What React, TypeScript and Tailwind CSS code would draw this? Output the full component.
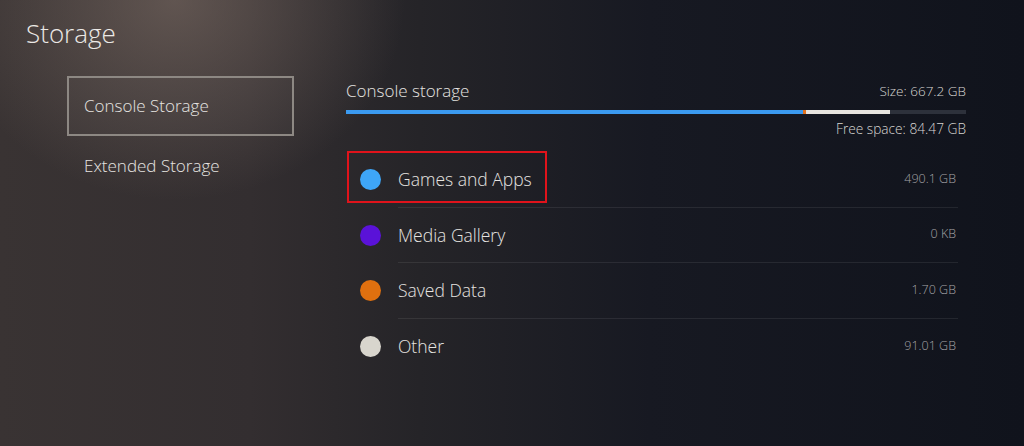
import React from "react";

const rows = [
  { label: "Games and Apps", value: "490.1 GB", color: "bg-[#3ea6f8]", highlight: true },
  { label: "Media Gallery", value: "0 KB", color: "bg-[#5a12d8]" },
  { label: "Saved Data", value: "1.70 GB", color: "bg-[#e0700f]" },
  { label: "Other", value: "91.01 GB", color: "bg-[#d8d5cd]" },
];

export default function App() {
  return (
    <div
      className="relative w-[1024px] h-[446px] overflow-hidden text-[#e6e4e1] bg-[radial-gradient(ellipse_230px_200px_at_175px_0px,rgba(140,122,112,0.5),rgba(140,122,112,0)),linear-gradient(90deg,#393333_0px,#332e30_250px,#252428_420px,#171922_650px,#10131c_1024px)]"
      style={{ fontFamily: '"Open Sans", "Noto Sans", sans-serif' }}
    >
      <div className="pl-[26px] pt-[18px] h-[48px] text-[26px] leading-[30px] font-light text-[#ebe9e6]">
        Storage
      </div>
      <div className="flex">
        <div className="ml-[67px] w-[227px] pt-[28px] flex flex-col">
          <div className="h-[60px] border-2 border-[#8d8883] flex items-center pl-[15px] text-[17px] font-light bg-[rgba(255,255,255,0.02)]">
            Console Storage
          </div>
          <div className="h-[60px] flex items-center pl-[17px] text-[17px] font-light">
            Extended Storage
          </div>
        </div>
        <div className="ml-[52px] w-[620px] pt-[31px] flex flex-col">
          <div className="flex justify-between items-center h-[24px]">
            <span className="text-[17px] font-light">Console storage</span>
            <span className="text-[13.5px] font-light text-[#d8d6d3]">Size: 667.2 GB</span>
          </div>
          <div className="mt-[7px] h-[4px] flex bg-[#2d313b]">
            <div className="w-[457px] bg-[#3b9af0]" />
            <div className="w-[3px] bg-[#e2711d]" />
            <div className="w-[84px] bg-[#e7e4df]" />
          </div>
          <div className="mt-[6px] h-[18px] flex justify-end items-center text-[13.7px] font-light text-[#d8d6d3]">
            Free space: 84.47 GB
          </div>
          <div className="mt-[14px] flex flex-col">
            {rows.map((r, i) => (
              <div key={r.label} className="relative h-[55.5px] flex items-center">
                <div className={`ml-[14px] w-[21px] h-[21px] rounded-full ${r.color}`} />
                <div
                  className={`ml-[17px] mr-[8px] flex-1 h-full flex items-center justify-between ${
                    i < rows.length - 1 ? "border-b border-[rgba(255,255,255,0.08)]" : ""
                  }`}
                >
                  <span className="text-[17.5px] font-light">{r.label}</span>
                  <span className="mr-[2px] text-[12.5px] font-light text-[#a4a3a6]">{r.value}</span>
                </div>
                {r.highlight && (
                  <div className="absolute left-[1px] top-[-1px] w-[200px] h-[52px] border-2 border-[#e0131b]" />
                )}
              </div>
            ))}
          </div>
        </div>
      </div>
    </div>
  );
}
